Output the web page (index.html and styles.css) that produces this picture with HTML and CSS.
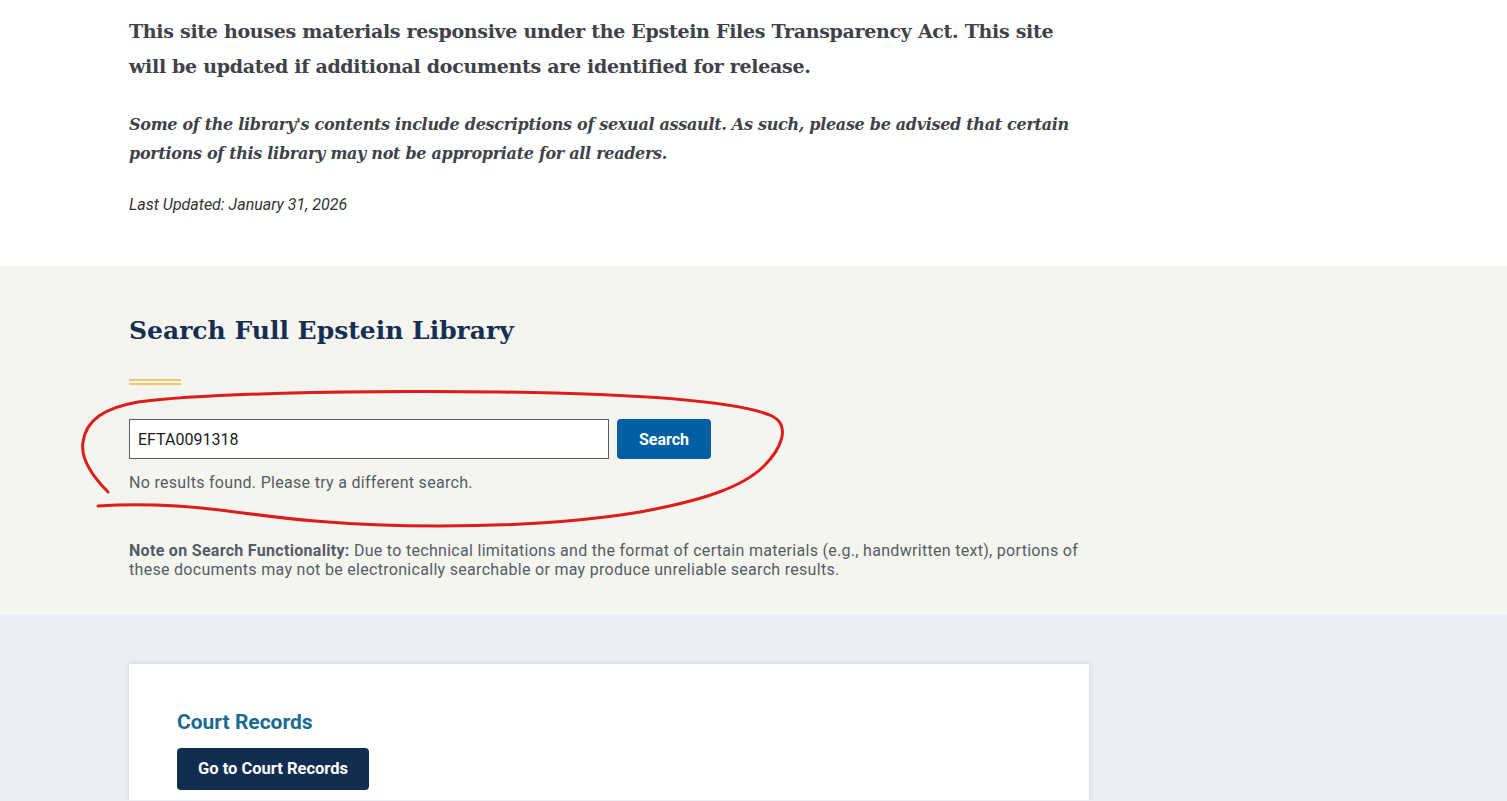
FILE: index.html
```html
<!DOCTYPE html>
<html lang="en">
<head>
<meta charset="utf-8">
<title>Epstein Library</title>
<link rel="stylesheet" href="styles.css">
</head>
<body>
<section class="intro">
  <div class="wrap">
    <p class="lead">This site houses materials responsive under the Epstein Files Transparency Act. This site will be updated if additional documents are identified for release.</p>
    <p class="warn">Some of the library's contents include descriptions of sexual assault. As such, please be advised that certain portions of this library may not be appropriate for all readers.</p>
    <p class="updated">Last Updated: January 31, 2026</p>
  </div>
</section>
<section class="search">
  <div class="wrap">
    <h2 class="search-title">Search Full Epstein Library</h2>
    <div class="rule"></div>
    <form class="search-form">
      <input class="search-input" type="text" value="EFTA0091318">
      <button class="search-btn" type="button">Search</button>
    </form>
    <p class="no-results">No results found. Please try a different search.</p>
    <p class="note"><strong>Note on Search Functionality:</strong> Due to technical limitations and the format of certain materials (e.g., handwritten text), portions of these documents may not be electronically searchable or may produce unreliable search results.</p>
  </div>
  <svg class="annot" width="720" height="150" viewBox="0 0 720 150" fill="none">
    <path d="M28 102 C 14 88, 0 70, 3 52 C 6 30, 24 18, 58 12 C 120 4, 260 0, 420 2 C 560 4, 660 12, 692 26 C 712 36, 700 60, 684 76 C 664 96, 626 110, 560 122 C 500 132, 440 136, 360 136 C 260 136, 200 128, 140 120 C 90 114, 50 114, 18 116" stroke="#de1c1c" stroke-width="3" stroke-linecap="round" stroke-linejoin="round"/>
  </svg>
</section>
<section class="records">
  <div class="wrap">
    <div class="card">
      <h3 class="card-title">Court Records</h3>
      <a class="card-btn" href="#">Go to Court Records</a>
    </div>
  </div>
</section>
</body>
</html>
```

FILE: styles.css
```css
html, body {
  margin: 0;
  padding: 0;
}
body {
  background: #eaeef6;
  font-family: "Roboto", "Liberation Sans", sans-serif;
}
.wrap {
  width: 960px;
  padding-left: 129px;
}
p { margin: 0; }

.intro {
  background: #ffffff;
  padding: 14px 0 51px;
}
.lead {
  font-family: "DejaVu Serif", "Liberation Serif", serif;
  font-weight: bold;
  font-size: 19px;
  letter-spacing: -0.3px;
  line-height: 35px;
  color: #404248;
  width: 960px;
}
.warn {
  margin-top: 26px;
  font-family: "DejaVu Serif", "Liberation Serif", serif;
  font-style: italic;
  font-weight: bold;
  font-size: 16px;
  letter-spacing: -0.3px;
  line-height: 29px;
  color: #404248;
  width: 960px;
}
.updated {
  margin-top: 27px;
  font-family: "Roboto", "Liberation Sans", sans-serif;
  font-style: italic;
  font-size: 16px;
  line-height: 20px;
  color: #333;
}

.search {
  position: relative;
  background: #f5f5f0;
  padding: 47px 0 36px;
}
.search-title {
  margin: 0;
  font-family: "DejaVu Serif", "Liberation Serif", serif;
  font-weight: bold;
  font-size: 25px;
  line-height: 36px;
  color: #162e51;
}
.rule {
  margin-top: 30px;
  width: 52px;
  height: 2px;
  border-top: 2px solid #f1c66b;
  border-bottom: 2px solid #f1c66b;
}
.search-form {
  display: flex;
  gap: 8px;
  margin-top: 34px;
}
.search-input {
  box-sizing: border-box;
  width: 480px;
  height: 40px;
  margin: 0;
  padding: 0 8px;
  border: 1px solid #565c65;
  border-radius: 0;
  background: #fff;
  font-family: "Roboto", "Liberation Sans", sans-serif;
  font-size: 16px;
  color: #1b1b1b;
}
.search-btn {
  box-sizing: border-box;
  width: 94px;
  height: 40px;
  border: 0;
  border-radius: 4px;
  background: #005ea2;
  color: #fff;
  font-family: "Roboto", "Liberation Sans", sans-serif;
  font-weight: bold;
  font-size: 16px;
}
.no-results {
  margin-top: 14px;
  font-family: "Roboto", "Liberation Sans", sans-serif;
  font-size: 16px;
  letter-spacing: 0.3px;
  line-height: 20px;
  color: #565c65;
}
.note {
  margin-top: 48px;
  font-family: "Roboto", "Liberation Sans", sans-serif;
  font-size: 16px;
  letter-spacing: 0.3px;
  line-height: 19px;
  color: #565c65;
}
.note strong { color: #565c65; }

.annot {
  position: absolute;
  left: 80px;
  top: 124px;
  pointer-events: none;
}

.records {
  padding-top: 49px;
  height: 136px;
}
.card {
  background: #fff;
  box-shadow: 0 0 6px rgba(0, 0, 0, 0.12);
  padding: 44px 48px 30px;
  min-height: 200px;
  box-sizing: border-box;
}
.card-title {
  margin: 0;
  font-family: "Roboto", "Liberation Sans", sans-serif;
  font-weight: bold;
  font-size: 21px;
  line-height: 28px;
  color: #1a6b90;
}
.card-btn {
  display: inline-block;
  margin-top: 12px;
  padding: 11px 21px;
  border-radius: 4px;
  background: #112e51;
  color: #fff;
  text-decoration: none;
  font-family: "Roboto", "Liberation Sans", sans-serif;
  font-weight: bold;
  font-size: 16.5px;
  line-height: 20px;
}
```
